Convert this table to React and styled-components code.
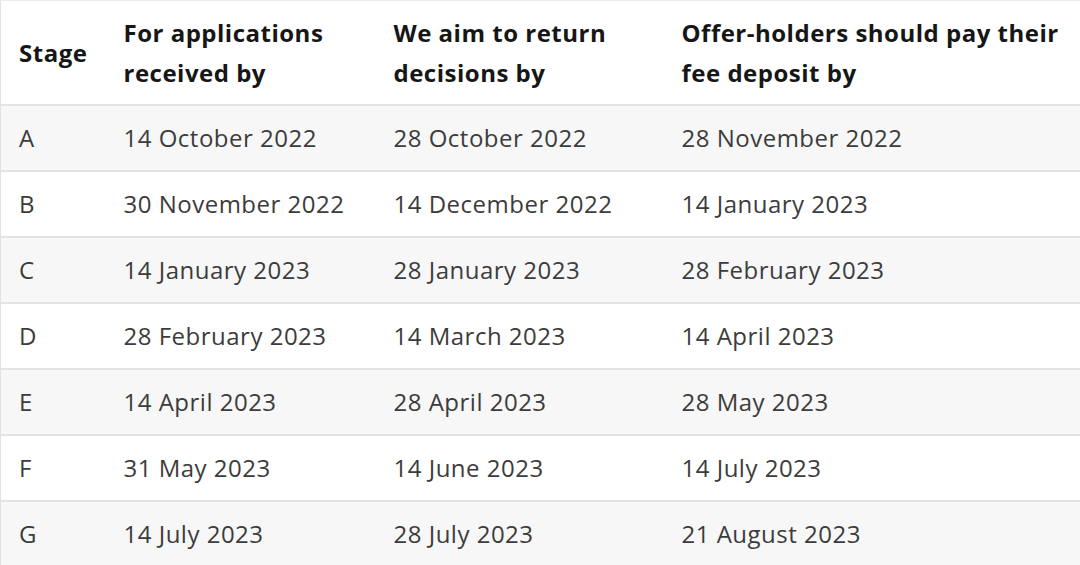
import React from "react";
import styled, { createGlobalStyle } from "styled-components";

const Global = createGlobalStyle`
  html, body { margin: 0; padding: 0; background: #ffffff; overflow: hidden; }
  body { font-family: "Open Sans", "Noto Sans", sans-serif; }
`;

const Table = styled.table`
  width: 1100px;
  border-collapse: collapse;
  border-left: 1px solid #e2e2e2;
  border-top: 1px solid #ececec;
  table-layout: fixed;
  font-family: "Open Sans", "Noto Sans", sans-serif;
  font-size: 24px;
  letter-spacing: 0.5px;
`;

const Col = styled.col`
  width: ${(p) => p.$w}px;
`;

const HeadCell = styled.th`
  text-align: left;
  vertical-align: middle;
  font-weight: 700;
  color: #161616;
  line-height: 40px;
  padding: 12px 18px 11px 18px;
  border-bottom: 2px solid #e3e3e3;
`;

const Row = styled.tr`
  background: ${(p) => (p.$shaded ? "#f7f7f7" : "#ffffff")};
  border-bottom: 2px solid #e3e3e3;
`;

const Cell = styled.td`
  color: #3c3c3c;
  font-weight: 400;
  line-height: 40px;
  padding: 12px 18px;
  white-space: nowrap;
`;

const rows = [
  ["A", "14 October 2022", "28 October 2022", "28 November 2022"],
  ["B", "30 November 2022", "14 December 2022", "14 January 2023"],
  ["C", "14 January 2023", "28 January 2023", "28 February 2023"],
  ["D", "28 February 2023", "14 March 2023", "14 April 2023"],
  ["E", "14 April 2023", "28 April 2023", "28 May 2023"],
  ["F", "31 May 2023", "14 June 2023", "14 July 2023"],
  ["G", "14 July 2023", "28 July 2023", "21 August 2023"],
];

export default function App() {
  return (
    <>
      <Global />
      <Table>
        <colgroup>
          <Col $w={105} />
          <Col $w={270} />
          <Col $w={288} />
          <Col $w={437} />
        </colgroup>
        <thead>
          <tr>
            <HeadCell>Stage</HeadCell>
            <HeadCell>For applications received by</HeadCell>
            <HeadCell>We aim to return decisions by</HeadCell>
            <HeadCell>Offer-holders should pay their fee deposit by</HeadCell>
          </tr>
        </thead>
        <tbody>
          {rows.map((r, i) => (
            <Row key={r[0]} $shaded={i % 2 === 0}>
              {r.map((c, j) => (
                <Cell key={j}>{c}</Cell>
              ))}
            </Row>
          ))}
        </tbody>
      </Table>
    </>
  );
}
